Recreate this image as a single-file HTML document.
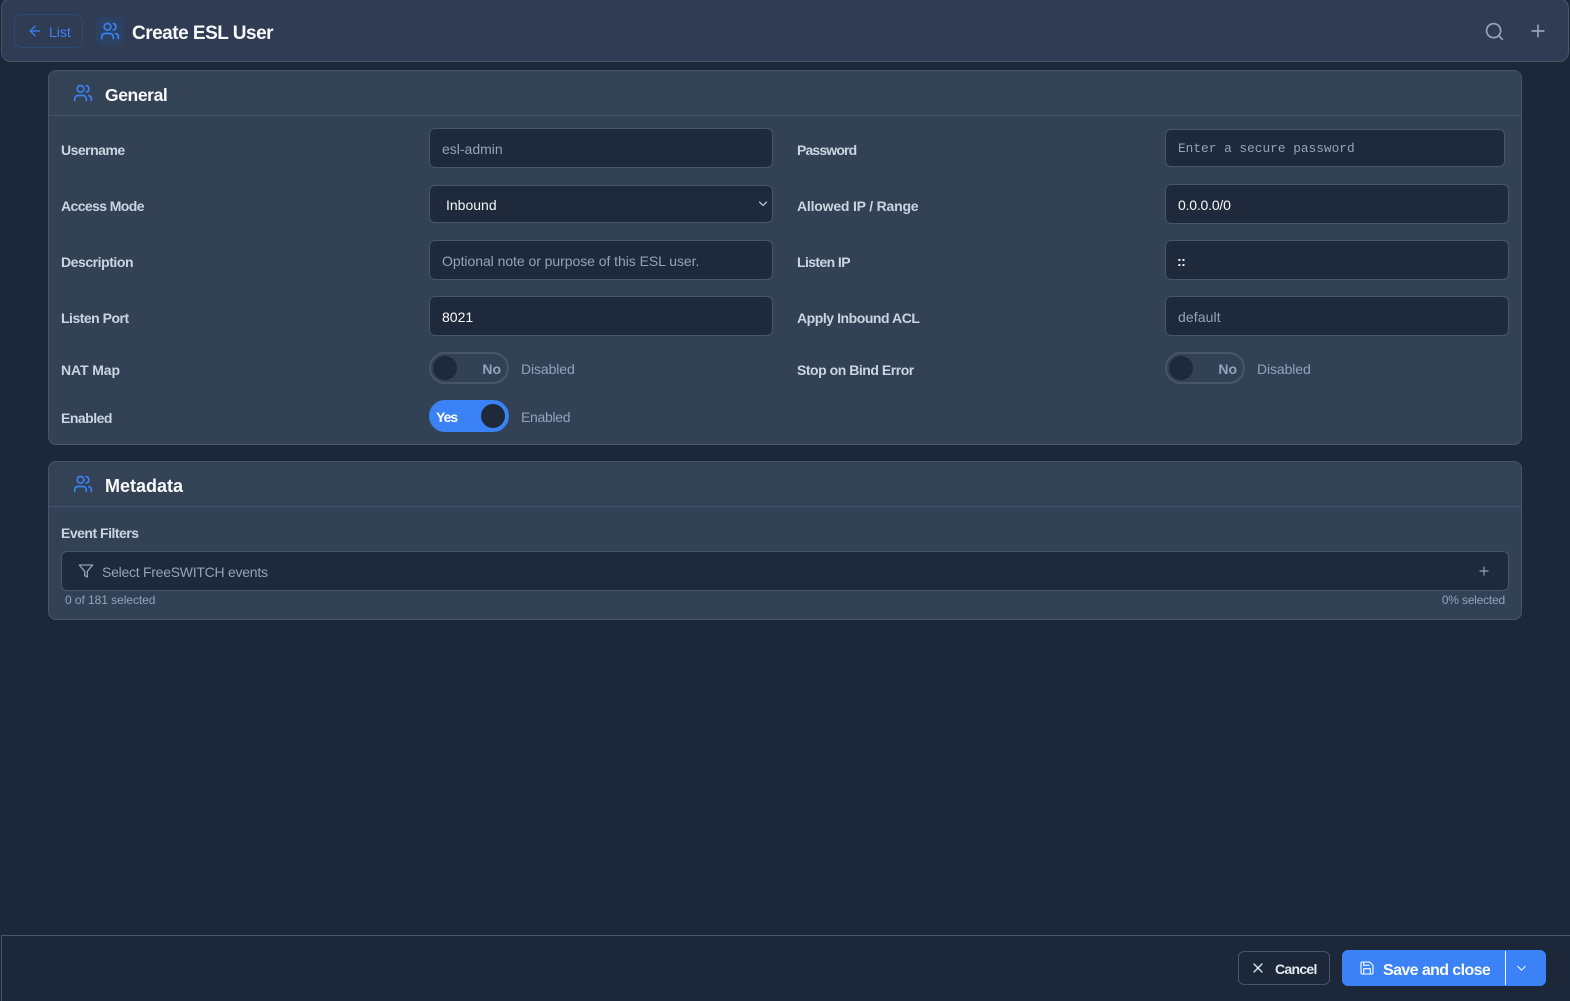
<!DOCTYPE html>
<html lang="en"><head><meta charset="utf-8"><title>Create ESL User</title>
<style>
*{box-sizing:border-box}
html,body{margin:0;padding:0;width:1570px;height:1000px;overflow:hidden;background:#1c273a;font-family:"Liberation Sans",sans-serif;color:#fff}
.a{position:absolute}
.t{position:absolute;white-space:nowrap;line-height:20px;font-size:14px}
.lab{font-weight:700;color:#cbd5e1;font-size:14px;letter-spacing:-.5px}
.panel{position:absolute;left:48px;width:1474px;background:#334155;border:1px solid #475569;border-radius:8px}
.phead{position:absolute;left:0;right:0;top:0;height:45px;border-bottom:1px solid #42506a;background:#344256;border-radius:8px 8px 0 0}
.inp{position:absolute;background:#1e293b;border:1px solid #475569;border-radius:6px}
.ph{color:#94a3b8}
.sw{position:absolute;width:80px;height:32px;border-radius:16px;border:2px solid #475569;background:#334155}
.sw i{position:absolute;width:24px;height:24px;border-radius:50%;background:#1e293b;top:2px;left:2px}
.sw b{position:absolute;font-size:14px;line-height:20px;top:5px;right:6px;color:#94a3b8}
svg{position:absolute;fill:none;stroke-linecap:round;stroke-linejoin:round}
</style></head><body>

<!-- Header -->
<div class="a" style="left:1px;top:-2px;width:1568px;height:64px;background:#2f3c54;border:1px solid #475569;border-radius:10px"></div>
<div class="a" style="left:14px;top:14px;width:69px;height:34px;border:1px solid #2f4a70;border-radius:8px"></div>
<svg style="left:27px;top:23px" width="16" height="16" viewBox="0 0 24 24" stroke="#3b82f6" stroke-width="2"><path d="m12 19-7-7 7-7"/><path d="M19 12H5"/></svg>
<div class="t" style="left:49px;top:22px;color:#3b82f6;font-size:14px;font-weight:400">List</div>
<div class="a" style="left:96px;top:17px;width:28px;height:28px;border-radius:6px;background:#2c4263"></div>
<svg style="left:100px;top:21px" width="20" height="20" viewBox="0 0 24 24" stroke="#3b82f6" stroke-width="2"><path d="M16 21v-2a4 4 0 0 0-4-4H6a4 4 0 0 0-4 4v2"/><circle cx="9" cy="7" r="4"/><path d="M22 21v-2a4 4 0 0 0-3-3.87"/><path d="M16 3.13a4 4 0 0 1 0 7.75"/></svg>
<div class="t" style="left:132px;top:22px;font-size:19px;line-height:24px;font-weight:700;letter-spacing:-.5px;color:#f8fafc">Create ESL User</div>
<svg style="left:1484px;top:21px" width="21" height="21" viewBox="0 0 24 24" stroke="#94a3b8" stroke-width="2"><circle cx="11" cy="11" r="8"/><path d="m21 21-4.3-4.3"/></svg>
<svg style="left:1528px;top:21px" width="20" height="20" viewBox="0 0 24 24" stroke="#94a3b8" stroke-width="2"><path d="M5 12h14"/><path d="M12 5v14"/></svg>

<!-- General -->
<div class="panel" style="top:70px;height:375px"><div class="phead"></div></div>
<svg style="left:73px;top:83px" width="20" height="20" viewBox="0 0 24 24" stroke="#3b82f6" stroke-width="2"><path d="M16 21v-2a4 4 0 0 0-4-4H6a4 4 0 0 0-4 4v2"/><circle cx="9" cy="7" r="4"/><path d="M22 21v-2a4 4 0 0 0-3-3.87"/><path d="M16 3.13a4 4 0 0 1 0 7.75"/></svg>
<div class="t" style="left:105px;top:83px;font-size:17.5px;line-height:24px;font-weight:700;letter-spacing:-.4px;color:#f8fafc">General</div>

<div class="t lab" style="left:61px;top:140px">Username</div>
<div class="t lab" style="left:61px;top:196px;letter-spacing:-.6px">Access Mode</div>
<div class="t lab" style="left:61px;top:252px;letter-spacing:-.45px">Description</div>
<div class="t lab" style="left:61px;top:308px">Listen Port</div>
<div class="t lab" style="left:61px;top:360px;letter-spacing:-.1px">NAT Map</div>
<div class="t lab" style="left:61px;top:408px">Enabled</div>
<div class="t lab" style="left:797px;top:140px;letter-spacing:-.85px">Password</div>
<div class="t lab" style="left:797px;top:196px;letter-spacing:-.2px">Allowed IP / Range</div>
<div class="t lab" style="left:797px;top:252px;letter-spacing:-.6px">Listen IP</div>
<div class="t lab" style="left:797px;top:308px;letter-spacing:-.45px">Apply Inbound ACL</div>
<div class="t lab" style="left:797px;top:360px;letter-spacing:-.47px">Stop on Bind Error</div>

<div class="inp" style="left:429px;top:128px;width:344px;height:40px"></div>
<div class="t ph" style="left:442px;top:139px">esl-admin</div>
<div class="inp" style="left:429px;top:185px;width:344px;height:38px"></div>
<div class="t" style="left:446px;top:195px;color:#f1f5f9">Inbound</div>
<svg style="left:757px;top:198px" width="12" height="12" viewBox="0 0 24 24" stroke="#cbd5e1" stroke-width="2.4"><path d="m5 8 7 7 7-7"/></svg>
<div class="inp" style="left:429px;top:240px;width:344px;height:40px"></div>
<div class="t ph" style="left:442px;top:251px;letter-spacing:-.05px">Optional note or purpose of this ESL user.</div>
<div class="inp" style="left:429px;top:296px;width:344px;height:40px"></div>
<div class="t" style="left:442px;top:307px;color:#f8fafc">8021</div>

<div class="inp" style="left:1165px;top:129px;width:340px;height:38px"></div>
<div class="t ph" style="left:1178px;top:139px;font-family:'Liberation Mono',monospace;font-size:12.8px">Enter a secure password</div>
<div class="inp" style="left:1165px;top:184px;width:344px;height:40px"></div>
<div class="t" style="left:1178px;top:195px;color:#f8fafc;letter-spacing:-.2px">0.0.0.0/0</div>
<div class="inp" style="left:1165px;top:240px;width:344px;height:40px"></div>
<div class="t" style="left:1177px;top:251px;color:#f8fafc;font-weight:700;letter-spacing:-.5px">::</div>
<div class="inp" style="left:1165px;top:296px;width:344px;height:40px"></div>
<div class="t ph" style="left:1178px;top:307px;letter-spacing:.1px">default</div>

<div class="sw" style="left:429px;top:352px"><i></i><b>No</b></div>
<div class="t ph" style="left:521px;top:359px;letter-spacing:-.1px">Disabled</div>
<div class="sw" style="left:1165px;top:352px"><i></i><b>No</b></div>
<div class="t ph" style="left:1257px;top:359px;letter-spacing:-.1px">Disabled</div>
<div class="sw" style="left:429px;top:400px;background:#3b82f6;border-color:#3b82f6"><i style="left:50px"></i><b style="left:5px;right:auto;color:#fff;letter-spacing:-1px">Yes</b></div>
<div class="t ph" style="left:521px;top:407px;letter-spacing:-.3px">Enabled</div>

<!-- Metadata -->
<div class="panel" style="top:461px;height:159px"><div class="phead"></div></div>
<svg style="left:73px;top:474px" width="20" height="20" viewBox="0 0 24 24" stroke="#3b82f6" stroke-width="2"><path d="M16 21v-2a4 4 0 0 0-4-4H6a4 4 0 0 0-4 4v2"/><circle cx="9" cy="7" r="4"/><path d="M22 21v-2a4 4 0 0 0-3-3.87"/><path d="M16 3.13a4 4 0 0 1 0 7.75"/></svg>
<div class="t" style="left:105px;top:474px;font-size:18px;line-height:24px;font-weight:700;color:#f8fafc">Metadata</div>
<div class="t lab" style="left:61px;top:523px">Event Filters</div>
<div class="inp" style="left:61px;top:551px;width:1448px;height:40px"></div>
<svg style="left:78px;top:563px" width="16" height="16" viewBox="0 0 24 24" stroke="#94a3b8" stroke-width="2"><path d="M22 3H2l8 9.46V19l4 2v-8.54L22 3z"/></svg>
<div class="t" style="left:102px;top:562px;color:#94a3b8;font-weight:400;letter-spacing:-.26px">Select FreeSWITCH events</div>
<svg style="left:1477px;top:564px" width="14" height="14" viewBox="0 0 24 24" stroke="#94a3b8" stroke-width="2"><path d="M5 12h14"/><path d="M12 5v14"/></svg>
<div class="t" style="left:65px;top:590px;font-size:12px;color:#94a3b8;letter-spacing:-.06px">0 of 181 selected</div>
<div class="t" style="right:65px;top:590px;font-size:12px;color:#94a3b8;letter-spacing:-.2px">0% selected</div>

<!-- Footer -->
<div class="a" style="left:1px;top:935px;width:1569px;height:66px;border:1px solid #475569;border-right:0;border-bottom:0;background:#1c273a"></div>
<div class="a" style="left:1238px;top:951px;width:92px;height:34px;border:1px solid #475569;border-radius:6px"></div>
<svg style="left:1250px;top:960px" width="16" height="16" viewBox="0 0 24 24" stroke="#e2e8f0" stroke-width="2"><path d="M18 6 6 18"/><path d="m6 6 12 12"/></svg>
<div class="t" style="left:1275px;top:959px;font-size:14px;font-weight:700;letter-spacing:-.7px;color:#e2e8f0">Cancel</div>
<div class="a" style="left:1342px;top:950px;width:204px;height:36px;background:#3b82f6;border-radius:6px"></div>
<div class="a" style="left:1505px;top:951px;width:1px;height:34px;background:#fff"></div>
<svg style="left:1359px;top:960px" width="16" height="16" viewBox="0 0 24 24" stroke="#dbeafe" stroke-width="2"><path d="M19 21H5a2 2 0 0 1-2-2V5a2 2 0 0 1 2-2h11l5 5v11a2 2 0 0 1-2 2z"/><path d="M17 21v-8H7v8"/><path d="M7 3v5h8"/></svg>
<div class="t" style="left:1383px;top:961px;font-size:16px;font-weight:700;letter-spacing:-.6px;color:#f8fafc">Save and close</div>
<svg style="left:1515px;top:962px" width="13" height="13" viewBox="0 0 24 24" stroke="#eff6ff" stroke-width="2"><path d="m5 8 7 7 7-7"/></svg>

</body></html>
